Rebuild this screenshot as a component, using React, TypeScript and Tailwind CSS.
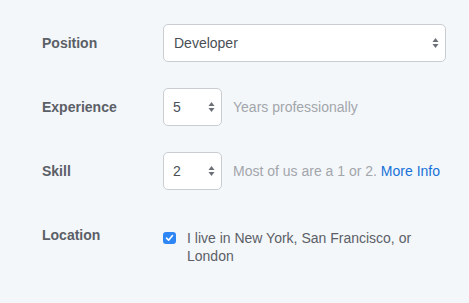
import React from "react";

const Arrows = () => (
  <svg width="7" height="12" viewBox="0 0 7 12" className="shrink-0">
    <path d="M3.5 1 L6.5 5 L0.5 5 Z" fill="#6b7076" />
    <path d="M3.5 11 L6.5 7 L0.5 7 Z" fill="#6b7076" />
  </svg>
);

const Label = ({ children }: { children: React.ReactNode }) => (
  <div className="w-[121px] shrink-0 text-[14px] font-bold text-[#5b6067] leading-[38px]">{children}</div>
);

export default function App() {
  return (
    <div
      className="w-[469px] h-[303px] bg-[#f4f7fa] pl-[42px] pt-[24px] flex flex-col gap-[26px]"
      style={{ fontFamily: '"Liberation Sans", Arial, sans-serif' }}
    >
      <div className="flex items-center h-[38px]">
        <Label>Position</Label>
        <div className="w-[283px] h-[38px] bg-white border border-[#c9cdd2] rounded-[5px] flex items-center justify-between pl-[10px] pr-[6px] text-[14px] text-[#4a4f56]">
          <span>Developer</span>
          <Arrows />
        </div>
      </div>
      <div className="flex items-center h-[38px]">
        <Label>Experience</Label>
        <div className="w-[59px] h-[38px] bg-white border border-[#c9cdd2] rounded-[5px] flex items-center justify-between pl-[9px] pr-[6px] text-[14px] text-[#4a4f56]">
          <span>5</span>
          <Arrows />
        </div>
        <span className="ml-[11px] text-[14px] text-[#a2a6ab]">Years professionally</span>
      </div>
      <div className="flex items-center h-[38px]">
        <Label>Skill</Label>
        <div className="w-[59px] h-[38px] bg-white border border-[#c9cdd2] rounded-[5px] flex items-center justify-between pl-[9px] pr-[6px] text-[14px] text-[#4a4f56]">
          <span>2</span>
          <Arrows />
        </div>
        <span className="ml-[11px] text-[14px] text-[#a2a6ab]">
          Most of us are a 1 or 2. <span className="text-[#1672d8]">More Info</span>
        </span>
      </div>
      <div className="flex items-start">
        <Label>Location</Label>
        <div className="flex items-start pt-[13px]">
          <div className="mt-[3px] w-[13px] h-[12px] rounded-[3px] bg-[#2e86f5] flex items-center justify-center shrink-0">
            <svg width="9" height="8" viewBox="0 0 9 8">
              <path d="M1.5 4.2 L3.6 6.2 L7.5 1.5" stroke="white" strokeWidth="1.6" fill="none" strokeLinecap="round" strokeLinejoin="round" />
            </svg>
          </div>
          <div className="ml-[11px] w-[258px] text-[14px] leading-[18px] text-[#5b6067]">
            I live in New York, San Francisco, or London
          </div>
        </div>
      </div>
    </div>
  );
}
